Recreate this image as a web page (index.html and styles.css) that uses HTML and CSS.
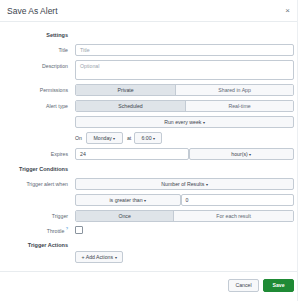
FILE: index.html
```html
<!DOCTYPE html>
<html lang="en">
<head>
    <meta charset="UTF-8">
    <title>Save As Alert</title>
    <link rel="stylesheet" href="styles.css">
</head>
<body>
    <div class="modal">
        <header class="modal-header">
            <h1>Save As Alert</h1>
            <span class="close">&times;</span>
        </header>
        <main class="modal-body">
            <div class="section">Settings</div>
            <div class="row">
                <label>Title</label>
                <div class="control"><div class="input placeholder">Title</div></div>
            </div>
            <div class="row">
                <label class="top">Description</label>
                <div class="control"><div class="input textarea placeholder">Optional</div></div>
            </div>
            <div class="row">
                <label>Permissions</label>
                <div class="control seg">
                    <div class="seg-btn active" style="flex: 101">Private</div>
                    <div class="seg-btn" style="flex: 119">Shared in App</div>
                </div>
            </div>
            <div class="row">
                <label>Alert type</label>
                <div class="control seg">
                    <div class="seg-btn active" style="flex: 111">Scheduled</div>
                    <div class="seg-btn" style="flex: 109">Real-time</div>
                </div>
            </div>
            <div class="row">
                <label></label>
                <div class="control"><div class="btn wide">Run every week <span class="caret">&#9662;</span></div></div>
            </div>
            <div class="row">
                <label></label>
                <div class="control inline">
                    <span class="word">On</span>
                    <div class="btn day">Monday <span class="caret">&#9662;</span></div>
                    <span class="word at">at</span>
                    <div class="btn time">6:00 <span class="caret">&#9662;</span></div>
                </div>
            </div>
            <div class="row">
                <label>Expires</label>
                <div class="control pair">
                    <div class="input value">24</div>
                    <div class="btn half">hour(s) <span class="caret">&#9662;</span></div>
                </div>
            </div>
            <div class="section">Trigger Conditions</div>
            <div class="row">
                <label>Trigger alert when</label>
                <div class="control"><div class="btn wide">Number of Results <span class="caret">&#9662;</span></div></div>
            </div>
            <div class="row">
                <label></label>
                <div class="control pair">
                    <div class="btn half">is greater than <span class="caret">&#9662;</span></div>
                    <div class="input value">0</div>
                </div>
            </div>
            <div class="row">
                <label>Trigger</label>
                <div class="control seg">
                    <div class="seg-btn active" style="flex: 99">Once</div>
                    <div class="seg-btn" style="flex: 121">For each result</div>
                </div>
            </div>
            <div class="row short">
                <label>Throttle <sup class="help">?</sup></label>
                <div class="control"><span class="checkbox"></span></div>
            </div>
            <div class="section actions">Trigger Actions</div>
            <div class="row">
                <label></label>
                <div class="control"><div class="btn add">+ Add Actions <span class="caret">&#9662;</span></div></div>
            </div>
        </main>
        <footer class="modal-footer">
            <div class="btn cancel">Cancel</div>
            <div class="btn save">Save</div>
        </footer>
    </div>
</body>
</html>
```

FILE: styles.css
```css
body {
    margin: 0;
    font-family: "Liberation Sans", Arial, sans-serif;
    background-color: #ffffff;
    color: #3c444d;
}
.modal {
    width: 298px;
    height: 301px;
    border-right: 1px solid #eceff2;
    box-sizing: border-box;
}
.modal-header {
    height: 22px;
    display: flex;
    align-items: center;
    justify-content: space-between;
    padding: 0 7px;
    border-bottom: 1px solid #e8ecef;
    box-sizing: border-box;
}
.modal-header h1 {
    margin: 0;
    font-size: 8.5px;
    font-weight: normal;
    color: #3c444d;
}
.close {
    font-size: 8px;
    color: #6b7580;
}
.modal-body {
    padding: 8px 3px 0 0;
}
.section {
    width: 68px;
    text-align: right;
    font-size: 5.5px;
    font-weight: bold;
    height: 10px;
    line-height: 10px;
    margin-bottom: 4px;
}
.section.actions {
    margin-top: 5px;
    margin-bottom: 1px;
}
.row {
    display: flex;
    align-items: center;
    margin-bottom: 4px;
    min-height: 12px;
}
.row.short {
    min-height: 7px;
    margin-top: 2px;
    margin-bottom: 6px;
}
.row label {
    width: 68px;
    flex: none;
    text-align: right;
    font-size: 5.2px;
    color: #5c6773;
    padding-right: 7px;
}
.row label.top {
    align-self: flex-start;
    padding-top: 3px;
}
.help {
    color: #1a7fd4;
    font-size: 4px;
}
.control {
    flex: 1;
}
.input {
    height: 12px;
    border: 1px solid #c3cbd4;
    border-radius: 2px;
    box-sizing: border-box;
    font-size: 5.2px;
    padding: 0 4px;
    line-height: 10px;
    background-color: #ffffff;
}
.input.textarea {
    height: 20px;
}
.placeholder {
    color: #9aa4ae;
}
.seg {
    display: flex;
    height: 12px;
    border: 1px solid #c3cbd4;
    border-radius: 2px;
    box-sizing: border-box;
    overflow: hidden;
}
.seg-btn {
    font-size: 5.2px;
    text-align: center;
    line-height: 10px;
    background-color: #f7f8fa;
    color: #5c6773;
}
.seg-btn.active {
    background-color: #dfe4e9;
    color: #3c444d;
    border-right: 1px solid #c3cbd4;
}
.btn {
    height: 12px;
    border: 1px solid #c3cbd4;
    border-radius: 2px;
    box-sizing: border-box;
    background-color: #f7f8fa;
    font-size: 5.2px;
    line-height: 10px;
    text-align: center;
    color: #3c444d;
}
.caret {
    font-size: 4px;
}
.inline {
    display: flex;
    align-items: center;
}
.word {
    font-size: 5.2px;
    color: #3c444d;
}
.day {
    width: 37px;
    margin-left: 4px;
}
.word.at {
    margin-left: 4px;
    margin-right: 3px;
}
.time {
    width: 28px;
}
.pair {
    display: flex;
}
.pair > * {
    flex: 1;
}
.checkbox {
    display: block;
    width: 6px;
    height: 6px;
    border: 1px solid #8a949e;
    border-radius: 1px;
}
.add {
    width: 48px;
}
.modal-footer {
    margin-top: 8px;
    border-top: 1px solid #e8ecef;
    display: flex;
    justify-content: flex-end;
    gap: 4px;
    padding: 7px 3px 0 0;
}
.cancel,
.save {
    width: 31px;
    height: 13px;
    line-height: 11px;
}
.save {
    background-color: #1f8a35;
    border-color: #1f8a35;
    color: #ffffff;
    font-weight: bold;
}
```
